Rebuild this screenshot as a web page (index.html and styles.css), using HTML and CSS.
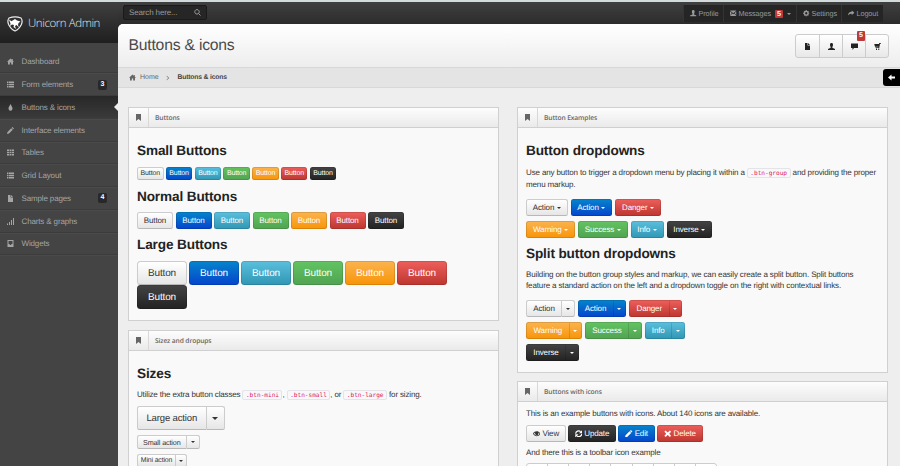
FILE: index.html
```
<!DOCTYPE html>
<html lang="en">
<head>
<meta charset="utf-8">
<title>Unicorn Admin</title>
<link rel="stylesheet" href="styles.css">
</head>
<body>
<svg class="defs" width="0" height="0">
<symbol id="home" viewBox="0 0 14 14"><path d="M7 1 0 7.500h2V13h3.700V9h2.600v4H12V7.500h2L11.500 5V2h-2v1.300z"/></symbol>
<symbol id="list" viewBox="0 0 14 14"><path d="M0 1h3v3H0zM4 1h10v3H4zM0 5.500h3v3H0zM4 5.500h10v3H4zM0 10h3v3H0zM4 10h10v3H4z"/></symbol>
<symbol id="drop" viewBox="0 0 14 14"><path d="M7 0c1 3 4 5.500 4 9a4 4.500 0 0 1-8 0c0-3.500 3-6 4-9z"/></symbol>
<symbol id="pencil" viewBox="0 0 14 14"><path d="M0 14l1-4 7.500-7.500 3 3L4 13zM9.300 1.700 11 0l3 3-1.700 1.700z"/></symbol>
<symbol id="grid" viewBox="0 0 14 14"><path d="M0 1h4v3H0zM5 1h4v3H5zM10 1h4v3h-4zM0 5.500h4v3H0zM5 5.500h4v3H5zM10 5.500h4v3h-4zM0 10h4v3H0zM5 10h4v3H5zM10 10h4v3h-4z"/></symbol>
<symbol id="file" viewBox="0 0 14 14"><path d="M2 0h5v5h5v9H2zM8 0l4 4H8z"/></symbol>
<symbol id="chart" viewBox="0 0 14 14"><path d="M0 11h2v3H0zM4 8h2v6H4zM8 4h2v10H8zM12 0h2v14h-2z"/></symbol>
<symbol id="inbox" viewBox="0 0 14 14"><path fill-rule="evenodd" d="M1 0h12v14H1zM3 2v6h2l1 2h2l1-2h2V2z"/></symbol>
<symbol id="user" viewBox="0 0 14 14"><path d="M7 0c2 0 3 1.300 3 3.500S9.300 7 8.700 8v1.500L14 12v2H0v-2l5.300-2.500V8C4.700 7 4 5.700 4 3.500S5 0 7 0z"/></symbol>
<symbol id="mail" viewBox="0 0 14 14"><path d="M0 1h14L7 7zM0 2.800l4 3.800-4 5zM14 2.800v8.800l-4-5zM5 7.500l2 1.500 2-1.500 5 5.500H0z"/></symbol>
<symbol id="cog" viewBox="0 0 14 14"><path fill="none" stroke="currentColor" stroke-width="3" d="M7 3a4 4 0 1 0 .01 0z"/><path d="M5.800 0h2.400v2.500H5.800zM5.800 11.500h2.400V14H5.800zM0 5.800h2.500v2.400H0zM11.500 5.800H14v2.400h-2.500zM1.500 3.200l1.700-1.700 2 2-1.700 1.700zM12.500 3.200l-1.700-1.700-2 2 1.700 1.700zM1.500 10.800l1.700 1.700 2-2-1.700-1.700zM12.500 10.800l-1.700 1.700-2-2 1.700-1.700z"/></symbol>
<symbol id="share" viewBox="0 0 14 14"><path d="M8 1l6 5-6 5V8C4 8 2 9 0 12c0-5 3-8 8-8z"/></symbol>
<symbol id="comment" viewBox="0 0 14 14"><path d="M0 1h14v9H6l-3 4v-4H0z"/></symbol>
<symbol id="cart" viewBox="0 0 14 14"><path d="M14 0v1.500h-2L10.500 10H3V8.700h6L9.200 7.500H2L.5 2H10L10.500 0zM4 11h2v3H4zM8.500 11h2v3h-2z"/></symbol>
<symbol id="search" viewBox="0 0 14 14"><path fill="none" stroke="currentColor" stroke-width="2" d="M6 1.200a4.500 4.500 0 1 0 .01 0zM9 9l4 4"/></symbol>
<symbol id="bookmark" viewBox="0 0 14 14"><path d="M2 0h10v14L7 10l-5 4z"/></symbol>
<symbol id="left" viewBox="0 0 14 14"><path d="M7 1v4h7v4H7v4L0 7z"/></symbol>
<symbol id="eye" viewBox="0 0 14 14"><path fill-rule="evenodd" d="M0 7c3-6 11-6 14 0-3 6-11 6-14 0zM1.800 7c1 1.700 2.200 2.600 3.600 3C7.800 10.700 11 9.500 12.200 7 11.500 5.800 11 5.200 10 4.700c.8 3.800-1 4.800-3 4.800S3.300 8 4 4.700C3 5.200 2.400 6 1.800 7z"/></symbol>
<symbol id="refresh" viewBox="0 0 14 14"><path fill="none" stroke="currentColor" stroke-width="2.300" d="M1.300 7A5.500 5.500 0 0 1 10.500 3M12.700 7A5.500 5.500 0 0 1 3.500 11"/><path d="M13.500 0v6h-6zM.5 14V8h6z"/></symbol>
<symbol id="cross" viewBox="0 0 14 14"><path d="M3 1l4 3.500L11 1l2.300 2.300L9.800 7l3.500 3.700L11 13 7 9.500 3 13 .7 10.700 4.200 7 .7 3.300z"/></symbol>
</svg>

<aside class="sidebar">
  <div class="brand">
    <svg class="brand-mark" viewBox="0 0 16 16"><path fill="#303030" stroke="#eee" stroke-width="1.200" d="M2 2Q8-.3 14 2q2 2.500.4 6.500Q12 13.500 8 15 4 13.500 1.600 8.500 0 4.500 2 2z"/><path fill="#fff" d="M2 3.500l2.500 1.700L8 3l2 1.500 3.500 1-2 1.500-.5 2 1 2.500L9.500 9 8 10l1 3-2.500-2 .5-2-2-.5-2 1.500.5-2.500z"/></svg>
    <span>Unicorn Admin</span>
  </div>
  <nav class="menu">
    <a><svg><use href="#home"/></svg>Dashboard</a>
    <a><svg><use href="#list"/></svg>Form elements<b>3</b></a>
    <a class="active"><svg><use href="#drop"/></svg>Buttons &amp; icons</a>
    <a><svg><use href="#pencil"/></svg>Interface elements</a>
    <a><svg><use href="#grid"/></svg>Tables</a>
    <a><svg><use href="#list"/></svg>Grid Layout</a>
    <a><svg><use href="#file"/></svg>Sample pages<b>4</b></a>
    <a><svg><use href="#chart"/></svg>Charts &amp; graphs</a>
    <a><svg><use href="#inbox"/></svg>Widgets</a>
  </nav>
</aside>

<div class="page">
  <header class="topbar">
    <div class="search"><span>Search here...</span><svg><use href="#search"/></svg></div>
    <nav class="usernav">
      <a class="u-profile"><svg><use href="#user"/></svg>Profile</a>
      <a class="u-messages"><svg><use href="#mail"/></svg>Messages<b>5</b><i class="caret"></i></a>
      <a class="u-settings"><svg><use href="#cog"/></svg>Settings</a>
      <a class="u-logout"><svg><use href="#share"/></svg>Logout</a>
    </nav>
  </header>
  <main class="content">
    <div class="content-header">
      <h1>Buttons &amp; icons</h1>
      <div class="quick">
        <a><svg><use href="#file"/></svg></a>
        <a><svg><use href="#user"/></svg></a>
        <a><svg><use href="#comment"/></svg><b>5</b></a>
        <a><svg><use href="#cart"/></svg></a>
      </div>
    </div>
    <div class="breadcrumb">
      <svg><use href="#home"/></svg><span>Home</span><em></em><strong>Buttons &amp; icons</strong>
      <div class="switcher"><svg><use href="#left"/></svg></div>
    </div>
    <div class="columns">
      <div class="column">
        <section class="panel p-buttons">
          <h5><i><svg><use href="#bookmark"/></svg></i><span>Buttons</span></h5>
          <div class="body">
            <h3>Small Buttons</h3>
            <div class="row small"><a class="btn">Button</a><a class="btn primary">Button</a><a class="btn info">Button</a><a class="btn success">Button</a><a class="btn warning">Button</a><a class="btn danger">Button</a><a class="btn inverse">Button</a></div>
            <h3>Normal Buttons</h3>
            <div class="row normal"><a class="btn">Button</a><a class="btn primary">Button</a><a class="btn info">Button</a><a class="btn success">Button</a><a class="btn warning">Button</a><a class="btn danger">Button</a><a class="btn inverse">Button</a></div>
            <h3>Large Buttons</h3>
            <div class="row large"><a class="btn">Button</a><a class="btn primary">Button</a><a class="btn info">Button</a><a class="btn success">Button</a><a class="btn warning">Button</a><a class="btn danger">Button</a><a class="btn inverse">Button</a></div>
          </div>
        </section>
        <section class="panel p-last">
          <h5><i><svg><use href="#bookmark"/></svg></i><span>Sizez and dropups</span></h5>
          <div class="body">
            <h3>Sizes</h3>
            <p class="sizes-text">Utilize the extra button classes <code>.btn-mini</code>, <code>.btn-small</code>, or <code>.btn-large</code> for sizing.</p>
            <div class="split s-large"><a class="btn">Large action</a><a class="btn toggle"><i class="caret"></i></a></div>
            <div class="split s-small"><a class="btn">Small action</a><a class="btn toggle"><i class="caret"></i></a></div>
            <div class="split s-mini"><a class="btn">Mini action</a><a class="btn toggle"><i class="caret"></i></a></div>
          </div>
        </section>
      </div>
      <div class="column">
        <section class="panel p-examples">
          <h5><i><svg><use href="#bookmark"/></svg></i><span>Button Examples</span></h5>
          <div class="body">
            <h3>Button dropdowns</h3>
            <p class="drop-text">Use any button to trigger a dropdown menu by placing it within a <code>.btn-group</code> and providing the proper<br>menu markup.</p>
            <div class="drops">
              <div><a class="btn d-action">Action<i class="caret"></i></a><a class="btn primary d-action">Action<i class="caret"></i></a><a class="btn danger d-danger">Danger<i class="caret"></i></a></div>
              <div><a class="btn warning d-warning">Warning<i class="caret"></i></a><a class="btn success d-success">Success<i class="caret"></i></a><a class="btn info d-info">Info<i class="caret"></i></a><a class="btn inverse d-inverse">Inverse<i class="caret"></i></a></div>
            </div>
            <h3 class="second">Split button dropdowns</h3>
            <p class="split-text">Building on the button group styles and markup, we can easily create a split button. Split buttons<br>feature a standard action on the left and a dropdown toggle on the right with contextual links.</p>
            <div class="drops split-drops">
              <div><div class="split"><a class="btn w-action">Action</a><a class="btn toggle"><i class="caret"></i></a></div><div class="split"><a class="btn primary w-action">Action</a><a class="btn primary toggle"><i class="caret"></i></a></div><div class="split"><a class="btn danger w-danger">Danger</a><a class="btn danger toggle"><i class="caret"></i></a></div></div>
              <div><div class="split"><a class="btn warning w-warning">Warning</a><a class="btn warning toggle"><i class="caret"></i></a></div><div class="split"><a class="btn success w-success">Success</a><a class="btn success toggle"><i class="caret"></i></a></div><div class="split"><a class="btn info w-info">Info</a><a class="btn info toggle"><i class="caret"></i></a></div></div>
              <div><div class="split"><a class="btn inverse w-inverse">Inverse</a><a class="btn inverse toggle"><i class="caret"></i></a></div></div>
            </div>
          </div>
        </section>
        <section class="panel p-last">
          <h5><i><svg><use href="#bookmark"/></svg></i><span>Buttons with icons</span></h5>
          <div class="body tight">
            <p>This is an example buttons with icons. About 140 icons are available.</p>
            <div class="row icons"><a class="btn i-view"><svg><use href="#eye"/></svg>View</a><a class="btn inverse i-update"><svg><use href="#refresh"/></svg>Update</a><a class="btn primary i-edit"><svg><use href="#pencil"/></svg>Edit</a><a class="btn danger i-delete"><svg><use href="#cross"/></svg>Delete</a></div>
            <p>And there this is a toolbar icon example</p>
            <div class="toolbar"><a></a><a></a><a></a><a></a><a></a><a></a><a></a><a></a><a></a></div>
          </div>
        </section>
      </div>
    </div>
  </main>
</div>
</body>
</html>
```
FILE: styles.css
```
* { box-sizing: border-box; }
body {
  margin: 0;
  width: 900px;
  height: 466px;
  overflow: hidden;
  display: flex;
  border-top: 2px solid #d3dadb;
  background: #414141;
  font: 8px/11px "Liberation Sans", Arial, sans-serif;
  letter-spacing: -.14px;
  color: #333;
  text-rendering: geometricPrecision;
}
.defs { position: absolute; }
svg { width: 7px; height: 7px; fill: currentColor; flex: none; }
h1, h3, h5, p { margin: 0; }
i, em { font-style: normal; }

.sidebar { width: 118px; flex: none; background: #444; color: #a5a5a5; }
.brand {
  height: 41px;
  display: flex;
  align-items: center;
  padding: 2px 0 0 7px;
  gap: 5px;
  background: linear-gradient(#3f3f3f, #1f1f1f);
  color: #e4e4e4;
  font: 300 11.800px/16px "Open Sans", sans-serif;
  letter-spacing: -.42px;
  white-space: nowrap;
}
.brand span { font-size: 11.500px; }
.brand-mark { width: 16px; height: 16px; }
.menu { padding-top: 7.500px; }
.menu a {
  position: relative;
  height: 22.750px;
  display: flex;
  align-items: center;
  padding: 1px 11px 0 7px;
  border-bottom: 1px solid #3c3c3c;
  box-shadow: 0 1px 0 #4a4a4a;
}
.menu svg { margin-right: 7.500px; }
.menu b {
  margin-left: auto;
  width: 9px;
  height: 10px;
  border-radius: 2px;
  background: #282828;
  color: #fff;
  font-size: 7px;
  line-height: 10px;
  text-align: center;
}
.menu .active { background: linear-gradient(#282828, #3a3a3a); }
.menu .active::after {
  content: "";
  position: absolute;
  right: 0;
  top: 7px;
  border: 4px solid transparent;
  border-left: 0;
  border-right-color: #eee;
}

.page { width: 782px; background: linear-gradient(#3f3f3f, #2c2c2c 22px, #1f1f1f 41px); }
.topbar { height: 22px; padding: 3px 17px 0 5px; display: flex; justify-content: space-between; }
.search {
  width: 84px;
  height: 15px;
  display: flex;
  align-items: center;
  justify-content: space-between;
  padding: 0 5px;
  border: 1px solid #1a1a1a;
  border-radius: 2px;
  background: #262626;
  color: #999;
}
.usernav { display: flex; height: 17px; background: #252525; color: #999; font-size: 7.300px; letter-spacing: -.1px; }
.usernav a { display: flex; align-items: center; border-left: 1px solid #343434; padding-left: 6px; gap: 2px; }
.usernav svg { width: 6.500px; height: 6.500px; }
.usernav b { background: #bd3a38; color: #fff; width: 8px; height: 8px; line-height: 8px; text-align: center; margin-left: 2px; border-radius: 1px; }
.usernav .caret { margin-left: 2px; border-width: 2px; border-bottom: 0; }
.u-profile { width: 40px; }
.u-messages { width: 73px; }
.u-settings { width: 45px; }
.u-logout { width: 42px; }

.caret { width: 0; height: 0; border: 2.300px solid transparent; border-top-color: currentColor; border-bottom: 0; flex: none; }
.content { height: 442px; overflow: hidden; border-top-left-radius: 5px; background: #eee; }
.content-header {
  height: 43px;
  padding: 10px 11px 0 10.500px;
  display: flex;
  justify-content: space-between;
  border-top-left-radius: 5px;
  background: linear-gradient(#fff, #ededed);
}
h1 { color: #4a4a4a; font-weight: normal; font-size: 15.700px; line-height: 24px; letter-spacing: -.2px; }
.quick { display: flex; height: 24px; border: 1px solid #ccc; border-radius: 3px; background: linear-gradient(#fff, #e8e8e8); color: #222; }
.quick a { position: relative; width: 23px; display: flex; align-items: center; justify-content: center; }
.quick a + a { border-left: 1px solid #ccc; }
.quick b { position: absolute; right: 0; top: -4px; width: 8px; height: 10px; background: #bd3a38; color: #fff; font-size: 7px; line-height: 10px; text-align: center; border-radius: 1px; }
.breadcrumb {
  height: 21px;
  display: flex;
  align-items: center;
  padding-left: 10.500px;
  border-top: 1px solid #d8d8d8;
  border-bottom: 1px solid #d8d8d8;
  background: #e4e4e4;
  color: #666;
  font-size: 7px;
  letter-spacing: 0;
}
.breadcrumb span { margin-left: 4.500px; width: 25px; }
.breadcrumb em { width: 4px; height: 4px; margin-right: 8.500px; border: solid #888; border-width: 1px 1px 0 0; transform: rotate(45deg) scale(.8); }
.breadcrumb strong { color: #444; font-size: 6.800px; letter-spacing: -.18px; }
.switcher { width: 17px; height: 17px; margin-left: auto; border-radius: 3px 0 0 3px; background: #000; color: #fff; display: flex; align-items: center; justify-content: center; }

.columns { display: flex; gap: 18.500px; padding: 19px 0 0 10px; }
.column { width: 370.500px; flex: none; }
.panel { border: 1px solid #d0d0d0; background: #f9f9f9; margin-bottom: 9px; }
.p-buttons { height: 214px; }
.p-examples { height: 266px; margin-bottom: 8px; }
.p-last { height: 200px; }
h5 {
  height: 20px;
  display: flex;
  border-bottom: 1px solid #d0d0d0;
  background: linear-gradient(#fdfdfd, #eaeaea);
  color: #666;
  font: 600 6.700px/20px "Open Sans", sans-serif;
  letter-spacing: -.12px;
}
h5 i { width: 20px; display: flex; align-items: center; justify-content: center; border-right: 1px solid #d8d8d8; }
h5 span { margin-left: 6px; }
.body { padding: 13px 8px 0; }
.tight { padding-top: 6px; }
h3 { font-size: 13.600px; letter-spacing: -.13px; line-height: 20px; color: #222; white-space: nowrap; }
p { white-space: nowrap; line-height: 12px; }
code {
  display: inline-block;
  height: 10px;
  padding: 0 2.500px;
  border: 1px solid #e3e3e8;
  border-radius: 2px;
  background: #f8f8fa;
  color: #d8225a;
  font: 6.100px/9px "DejaVu Sans Mono", monospace;
  letter-spacing: 0;
}
.btn {
  display: flex;
  align-items: center;
  justify-content: center;
  height: 17px;
  border: 1px solid #ccc;
  border-bottom-color: #b8b8b8;
  border-radius: 2.500px;
  background: linear-gradient(#fff, #e6e6e6);
  color: #333;
  white-space: nowrap;
}
.primary, .info, .success, .warning, .danger, .inverse { color: #fff; border-color: rgba(0, 0, 0, .12); background-origin: border-box; }
.primary { background-image: linear-gradient(#0585cc, #0544cc); }
.info { background-image: linear-gradient(#5bc0de, #2f96b4); }
.success { background-image: linear-gradient(#62c462, #51a351); }
.warning { background-image: linear-gradient(#fbb450, #f89406); }
.danger { background-image: linear-gradient(#ee5f5b, #bd362f); }
.inverse { background-image: linear-gradient(#444, #222); }
.row { display: flex; }
.small { gap: 2.300px; margin: 6px 0 6.500px; }
.small .btn { width: 26.500px; height: 13px; font-size: 7px; }
.normal { gap: 2.500px; margin: 5.500px 0 6px; }
.normal .btn { width: 36px; }
.large { flex-wrap: wrap; gap: 0 2px; margin-top: 6px; padding-right: 30px; }
.large .btn { width: 50px; height: 24px; font-size: 10px; border-radius: 3.500px; }
.drops { display: grid; gap: 5px; margin-top: 8px; }
.split-drops { margin-top: 9px; }
.drops > div { display: flex; gap: 3px; }
.drops .caret { margin-left: 2.500px; }
.d-action { width: 41.500px; }
.d-danger { width: 46px; }
.d-warning { width: 49px; }
.d-success { width: 49.500px; }
.d-info { width: 33px; }
.d-inverse { width: 45.500px; }
.second { margin-top: 6px; }
.drop-text { margin-top: 6px; }
.split-text { margin-top: 5px; line-height: 11px; letter-spacing: -.13px; }
.split { display: flex; }
.split .btn:first-child { border-radius: 2.500px 0 0 2.500px; border-right: 0; }
.split .toggle { width: 13.500px; border-radius: 0 2.500px 2.500px 0; }
.split .caret { margin: 0; }
.w-action { width: 35px; }
.w-danger { width: 39.500px; }
.w-warning { width: 42.500px; }
.w-success { width: 43px; }
.w-info { width: 26.500px; }
.w-inverse { width: 39px; }
.sizes-text { margin: 5px 0 5px; letter-spacing: -.16px; }
.s-large .btn { width: 68.500px; height: 24px; font-size: 9.500px; }
.s-large .toggle { width: 19.500px; }
.s-large .caret { border-width: 3px 3px 0; }
.s-small { margin: 5px 0; }
.s-small .btn { width: 48.500px; height: 14px; font-size: 7.200px; }
.s-small .toggle { width: 14px; }
.s-mini .btn { width: 38px; height: 13px; font-size: 6.900px; }
.s-mini .toggle { width: 12px; }
.icons { gap: 2px; margin: 5px 0; }
.icons svg { width: 7.500px; height: 7.500px; margin-right: 2px; }
.i-view { width: 40px; }
.i-update { width: 48px; }
.i-edit { width: 37px; }
.i-delete { width: 46px; }
.toolbar { display: flex; margin-top: 4px; width: 191px; height: 17px; border: 1px solid #ccc; border-radius: 3px; background: #fff; }
.toolbar a { flex: 1; }
.toolbar a + a { border-left: 1px solid #ccc; }
```
